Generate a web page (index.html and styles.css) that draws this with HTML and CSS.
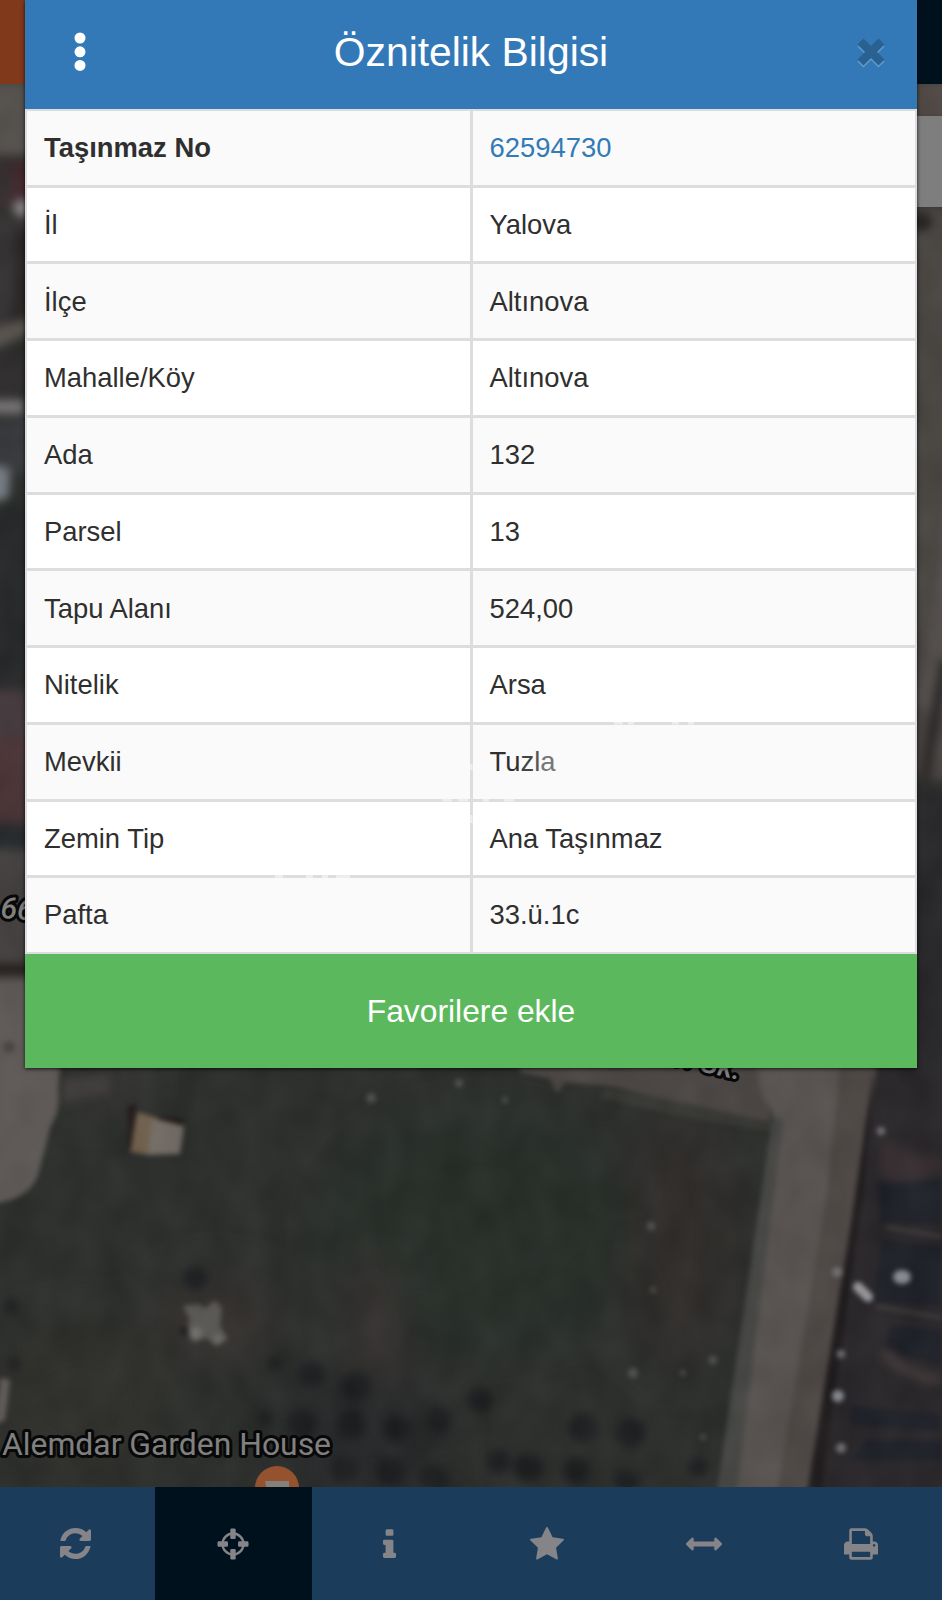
FILE: index.html
```html
<!DOCTYPE html>
<html lang="tr">
<head>
<meta charset="utf-8">
<title>Öznitelik Bilgisi</title>
<link rel="stylesheet" href="styles.css">
</head>
<body>
<div class="app">
  <svg class="map" viewBox="0 0 942 1600" aria-hidden="true">
    <defs>
      <filter id="soft" x="-20%" y="-20%" width="140%" height="140%" color-interpolation-filters="sRGB"><feGaussianBlur stdDeviation="2.4"/></filter>
      <filter id="blur" x="-20%" y="-20%" width="140%" height="140%" color-interpolation-filters="sRGB"><feGaussianBlur stdDeviation="5"/></filter>
      <filter id="haze" x="-50%" y="-50%" width="200%" height="200%" color-interpolation-filters="sRGB"><feGaussianBlur stdDeviation="22"/></filter>
      <filter id="grain" x="0" y="0" width="100%" height="100%" color-interpolation-filters="sRGB">
        <feTurbulence type="fractalNoise" baseFrequency=".03 .022" numOctaves="2" seed="8"/>
        <feColorMatrix values=".7 0 0 0 -.15  .7 0 0 0 -.15  .7 0 0 0 -.15  0 0 0 0 .08"/>
      </filter>
    </defs>
    <rect width="942" height="1600" fill="#2d302d"/>
    <g filter="url(#haze)">
      <ellipse cx="480" cy="1230" rx="150" ry="110" fill="#28302a"/>
      <ellipse cx="680" cy="1240" rx="60" ry="130" fill="#312e2c"/>
      <ellipse cx="375" cy="1320" rx="28" ry="75" fill="#393433"/>
      <ellipse cx="215" cy="1320" rx="60" ry="45" fill="#383432"/>
      <ellipse cx="80" cy="1400" rx="90" ry="80" fill="#31312d"/>
      <rect x="270" y="1380" width="170" height="120" fill="#292a2b"/>
      <ellipse cx="105" cy="1085" rx="45" ry="20" fill="#3c3938"/>
    </g>
    <g filter="url(#blur)" fill="#1c1e20">
      <circle cx="312" cy="1374" r="13"/><circle cx="356" cy="1386" r="14"/><circle cx="302" cy="1424" r="14"/><circle cx="352" cy="1424" r="14"/><circle cx="396" cy="1429" r="13"/><circle cx="439" cy="1420" r="13"/><circle cx="344" cy="1470" r="14"/><circle cx="390" cy="1471" r="14"/><circle cx="434" cy="1478" r="14"/><circle cx="274" cy="1363" r="7"/><circle cx="266" cy="1418" r="8"/><circle cx="480" cy="1400" r="12"/><circle cx="528" cy="1468" r="14"/><circle cx="584" cy="1428" r="15"/><circle cx="630" cy="1434" r="15"/><circle cx="576" cy="1470" r="13"/><circle cx="626" cy="1482" r="12"/><circle cx="698" cy="1467" r="10"/><circle cx="498" cy="1462" r="12"/>
      <circle cx="195" cy="1278" r="12"/><circle cx="10" cy="1306" r="8"/><circle cx="14" cy="1364" r="7"/>
      <path d="M62 1080L110 1072 108 1092 62 1104Z" fill="#444040"/>
    </g>
    <g filter="url(#soft)">
      <path d="M-10 950H70L58 1090Q61 1110 50 1128L40 1168Q34 1200-10 1204Z" fill="#625d5b"/>
      <path d="M0 1378L10 1380 5 1420-5 1425Z" fill="#65605e"/>
      <!-- farm building and rubble -->
      <path d="M127 1106L137 1104 136 1116 184 1118 182 1130 128 1150Z" fill="#241c1a"/>
      <path d="M137 1112L158 1118 150 1155 130 1152Z" fill="#75644f"/>
      <path d="M152 1118L184 1126 180 1154 148 1155Z" fill="#777069"/>
      <path d="M183 1306L198 1304 206 1308 215 1300 222 1308 220 1326 228 1339 216 1346 206 1338 193 1342 186 1330 190 1320Z" fill="#5e5c59"/>
      <circle cx="196" cy="1333" r="6" fill="#73716e"/><circle cx="218" cy="1339" r="5" fill="#6d6b69"/>
      <circle cx="184" cy="1331" r="5" fill="#242020"/>
      <!-- road and pavement -->
      <path d="M873 1000H970V1500H808Z" fill="#2b282b"/>
      <path d="M520 1050H770V1122L700 1108 610 1086 565 1082 557 1094 550 1079 520 1072Z" fill="#4e4947"/>
      <path d="M605 1088L690 1104 770 1122 774 1132 690 1118 600 1098Z" fill="#393a36"/>
      <path d="M753 1050H880L873 1090 811 1500H717L773 1120Q772 1105 762 1098Z" fill="#5b5653"/>
      <path d="M842 1050H880L873 1090 811 1500H776L826 1200Z" fill="#504a47"/>
      <path d="M773 1115L783 1120 737 1490H717Z" fill="#494a48"/>
      <path d="M874 1068L865 1180 820 1500H806L850 1230Z" fill="#1f1b1d"/>
      <g fill="#20222a">
        <path d="M878 1181L942 1178V1225L880 1223Z"/><path d="M882 1240L942 1246V1306L872 1302Z"/><path d="M890 1325L942 1330V1365L885 1350Z"/><path d="M850 1405L942 1415V1432L850 1425Z"/><path d="M865 1440H942V1461H850Z"/>
      </g>
      <path d="M886 1227L942 1237M876 1306L942 1318" stroke="#454141" stroke-width="3"/>
    </g>
    <g filter="url(#blur)">
      <path d="M886 1348Q910 1372 942 1374V1386Q905 1382 881 1356Z" fill="#443b3c"/>
      <path d="M882 1140Q908 1150 942 1160V1170Q900 1190 879 1175Z" fill="#393033"/>
    </g>
    <g filter="url(#soft)">
      <path d="M858 1287L868 1297" stroke="#a09fa3" stroke-width="10" stroke-linecap="round"/>
      <ellipse cx="902" cy="1277" rx="9" ry="7" fill="#92949a"/><circle cx="838" cy="1396" r="6" fill="#91929a"/>
      <g fill="#77767a"><circle cx="837" cy="1272" r="5"/><circle cx="841" cy="1354" r="4"/><circle cx="841" cy="1448" r="5"/><circle cx="881" cy="1131" r="4"/></g>
      <g fill="#525651"><circle cx="371" cy="1098" r="5"/><circle cx="459" cy="1083" r="4"/><circle cx="505" cy="1100" r="3"/><circle cx="651" cy="1226" r="4"/><circle cx="653" cy="1290" r="3"/><circle cx="713" cy="1360" r="4"/><circle cx="633" cy="1373" r="5"/><circle cx="683" cy="1373" r="3"/><circle cx="703" cy="1437" r="3"/></g>
      <circle cx="9" cy="1047" r="6" fill="#4c4644"/>
    </g>
    <g filter="url(#blur)">
      <!-- left margin -->
      <rect x="-16" y="80" width="50" height="75" fill="#585450"/>
      <rect x="-16" y="160" width="50" height="46" fill="#42292e"/><rect x="-16" y="156" width="27" height="46" fill="#352f30"/>
      <circle cx="22" cy="208" r="9" fill="#8a8689"/>
      <rect x="-16" y="218" width="50" height="110" fill="#393638"/><path d="M16 230H40V320H12Z" fill="#292524"/>
      <rect x="-16" y="348" width="50" height="48" fill="#302e2e"/>
      <rect x="-16" y="420" width="50" height="55" fill="#383a3e"/>
      <rect x="-16" y="508" width="50" height="180" fill="#292a2b"/>
      <path d="M-15 330L30 318V334L-15 352Z" fill="#5c5751"/><rect x="-16" y="400" width="40" height="14" fill="#7d7879"/>
      <path d="M-15 464L10 468 9 498-15 504Z" fill="#7d838b"/>
      <rect x="-16" y="690" width="50" height="48" fill="#483c40"/><rect x="-16" y="738" width="50" height="84" fill="#4b3437"/>
      <rect x="-16" y="826" width="50" height="23" fill="#272a2d"/><rect x="-16" y="849" width="50" height="114" fill="#474443"/><rect x="-16" y="963" width="50" height="14" fill="#241f1d"/>
      <!-- right margin -->
      <rect x="910" y="80" width="50" height="42" fill="#554d4a"/><rect x="910" y="206" width="50" height="510" fill="#4c4844"/><circle cx="922" cy="222" r="10" fill="#242323"/>
      <path d="M952 480L926 650 912 705 960 725Z" fill="#575250"/>
      <path d="M912 705L960 718V780H912Z" fill="#4b4644"/><rect x="910" y="790" width="50" height="285" fill="#29282b"/>
      <path d="M946 660L924 780" stroke="#292524" stroke-width="10"/>
    </g>
    <rect width="942" height="1600" filter="url(#grain)"/>
    <g class="street"><text x="0" y="918" transform="rotate(4 0 918)">66</text><text x="652" y="1060" transform="rotate(13 652 1060)">60. Sk.</text></g>
    <text class="place" x="2" y="1455" textLength="329" lengthAdjust="spacingAndGlyphs">Alemdar Garden House</text>
    <circle cx="277" cy="1488" r="22" fill="#94522f"/>
    <path d="M265 1481H289V1490H267Z" fill="#858079"/>
    <rect x="910" y="116" width="32" height="91" fill="#7f7e7e"/>
  </svg>

  <div class="topbar"><span class="topbar-brand"></span></div>

  <section class="dialog">
    <header class="dialog-header">
      <svg class="more" viewBox="0 0 12 40"><circle cx="6" cy="6" r="5.5"/><circle cx="6" cy="19.8" r="5.5"/><circle cx="6" cy="33.4" r="5.5"/></svg>
      <h1 class="title">Öznitelik Bilgisi</h1>
      <svg class="close" viewBox="0 0 30 32"><path class="close-light" d="M4.5 4.5L25.5 25.5M25.5 4.5L4.5 25.5" transform="translate(0 2)"/><path d="M4.5 4.5L25.5 25.5M25.5 4.5L4.5 25.5"/></svg>
    </header>
    <dl class="grid">
      <div class="row"><dt class="strong">Taşınmaz No</dt><dd class="link">62594730</dd></div>
      <div class="row"><dt>İl</dt><dd>Yalova</dd></div>
      <div class="row"><dt>İlçe</dt><dd>Altınova</dd></div>
      <div class="row"><dt>Mahalle/Köy</dt><dd>Altınova</dd></div>
      <div class="row"><dt>Ada</dt><dd>132</dd></div>
      <div class="row"><dt>Parsel</dt><dd>13</dd></div>
      <div class="row"><dt>Tapu Alanı</dt><dd>524,00</dd></div>
      <div class="row"><dt>Nitelik</dt><dd>Arsa</dd></div>
      <div class="row"><dt>Mevkii</dt><dd>Tu<span class="fade-1">z</span><span class="fade-2">l</span><span class="fade-3">a</span></dd></div>
      <div class="row"><dt>Zemin Tip</dt><dd>Ana Taşınmaz</dd></div>
      <div class="row"><dt>Pafta</dt><dd>33.ü.1c</dd></div>
    </dl>
    <button class="favorite">Favorilere ekle</button>
  </section>

  <svg class="wear" viewBox="0 0 942 1600" aria-hidden="true"><path d="M275 876.5H283M306 876.5H313M322 876.5H328M336 876.5H350M442 800H452M458 800H468M483 800H489M504 800H514M614 723H623M628 723H634M672 723H679M688 723H694M471 764V770M471 815V823"/></svg>

  <nav class="toolbar">
    <a class="tool"><svg width="31" height="31" viewBox="0 0 1536 1536"><path d="M1511 928q0 5-1 7-64 268-268 434.5t-478 166.5q-146 0-282.5-55t-243.5-157l-129 129q-19 19-45 19t-45-19-19-45v-448q0-26 19-45t45-19h448q26 0 45 19t19 45-19 45l-137 137q71 66 161 102t187 36q134 0 250-65t186-179q11-17 53-117 8-23 30-23h192q13 0 22.5 9.5t9.5 22.5zm25-800v448q0 26-19 45t-45 19h-448q-26 0-45-19t-19-45 19-45l138-138q-148-137-349-137-134 0-250 65t-186 179q-11 17-53 117-8 23-30 23h-199q-13 0-22.5-9.5t-9.5-22.5v-7q65-268 270-434.5t480-166.5q146 0 284 55.5t245 156.5l130-129q19-19 45-19t45 19 19 45z"/></svg></a>
    <a class="tool active"><svg width="32" height="32" viewBox="0 0 32 32"><circle cx="16" cy="16" r="10.5" fill="none" stroke="currentColor" stroke-width="2.4"/><rect x="13.3" y=".5" width="5.4" height="10.5" rx="1.3"/><rect x="13.3" y="21" width="5.4" height="10.5" rx="1.3"/><rect x=".5" y="13.3" width="10.5" height="5.4" rx="1.3"/><rect x="21" y="13.3" width="10.5" height="5.4" rx="1.3"/></svg></a>
    <a class="tool"><svg width="13" height="29" viewBox="0 0 640 1420"><path d="M640 1228v128q0 26-19 45t-45 19h-512q-26 0-45-19t-19-45v-128q0-26 19-45t45-19h64v-384h-64q-26 0-45-19t-19-45v-128q0-26 19-45t45-19h384q26 0 45 19t19 45v576h64q26 0 45 19t19 45zm-128-1152v192q0 26-19 45t-45 19h-256q-26 0-45-19t-19-45v-192q0-26 19-45t45-19h256q26 0 45 19t19 45z"/></svg></a>
    <a class="tool"><svg width="34" height="34" viewBox="0 0 1664 1664"><path d="M1664 615q0 22-26 48l-363 354 86 500q1 7 1 20 0 21-10.5 35.5t-30.5 14.5q-19 0-40-12l-449-236-449 236q-22 12-40 12-21 0-31.5-14.5t-10.5-35.5q0-6 2-20l86-500-364-354q-25-27-25-48 0-37 56-46l502-73 225-455q19-41 49-41t49 41l225 455 502 73q56 9 56 46z"/></svg></a>
    <a class="tool"><svg width="36" height="26" viewBox="0 0 1792 1280"><path d="M1792 640q0 26-19 45l-256 256q-19 19-45 19t-45-19-19-45v-128h-1024v128q0 26-19 45t-45 19-45-19l-256-256q-19-19-19-45t19-45l256-256q19-19 45-19t45 19 19 45v128h1024v-128q0-26 19-45t45-19 45 19l256 256q19 19 19 45z"/></svg></a>
    <a class="tool"><svg width="34" height="32" viewBox="0 0 1664 1536"><path d="M384 1408h896v-256h-896v256zm0-640h896v-384h-160q-40 0-68-28t-28-68v-160h-640v640zm1152 64q0-26-19-45t-45-19-45 19-19 45 19 45 45 19 45-19 19-45zm128 0v416q0 13-9.5 22.5t-22.5 9.5h-224v160q0 40-28 68t-68 28h-960q-40 0-68-28t-28-68v-160h-224q-13 0-22.5-9.5t-9.5-22.5v-416q0-79 56.5-135.5t135.5-56.5h64v-544q0-40 28-68t68-28h672q40 0 88 20t76 48l152 152q28 28 48 76t20 88v256h64q79 0 135.5 56.5t56.5 135.5z"/></svg></a>
  </nav>
</div>
</body>
</html>
```
FILE: styles.css
```css
* { box-sizing: border-box; }
body { margin: 0; font-family: "Liberation Sans", Arial, sans-serif; color: #2f2f2f; }
.app { position: relative; width: 942px; height: 1600px; overflow: hidden; display: flex; flex-direction: column; justify-content: space-between; }
.map, .wear { position: absolute; left: 0; top: 0; width: 942px; height: 1600px; }
.wear { fill: none; stroke: #f8f8f8; stroke-width: 3; opacity: .6; pointer-events: none; }
.place, .street { font-family: Roboto, sans-serif; fill: #808080; stroke: #080808; stroke-width: 6px; paint-order: stroke; stroke-linejoin: round; }
.place { font-size: 31.5px; }
.street { font-size: 30px; font-weight: 500; font-style: italic; }
.topbar { position: absolute; left: 0; top: 0; width: 100%; height: 84px; background: #00111e; }
.topbar-brand { display: block; width: 60px; height: 84px; background: #80391b; }
.dialog { position: relative; width: 892px; height: 1068px; margin-left: 25px; display: flex; flex-direction: column; box-shadow: 0 1px 4px rgba(0,0,0,.75); }
.dialog-header { height: 109px; flex: none; padding: 0 31px 0 49px; background: #3379b7; display: flex; align-items: center; justify-content: space-between; }
.more { width: 12px; height: 40px; fill: #fff; margin-bottom: 5px; }
.title { margin: 0 0 4px 0; font-size: 40.8px; font-weight: 400; line-height: 1; color: #fff; }
.close { width: 30px; height: 32px; margin-bottom: 3px; fill: none; stroke: #296192; stroke-width: 8.5; stroke-linecap: butt; }
.close-light { stroke: #659bc9; }
.grid { margin: 0; height: 845px; flex: none; display: grid; grid-template-rows: repeat(11, 1fr); gap: 3px; padding: 2px; background: #dddddf; }
.row { display: grid; grid-template-columns: 443px 1fr; gap: 3px; }
.row dt, .row dd { margin: 0; display: flex; align-items: center; padding: 0 0 0 17px; background: #fff; font-size: 27.4px; line-height: 1; }
.row:nth-child(odd) dt, .row:nth-child(odd) dd { background: #fafafa; }
.row .strong { font-weight: 700; }
.row .link { color: #337ab7; }
.row dd { padding-left: 16.5px; }
.fade-1 { color: #444; }
.fade-2 { color: #555; }
.fade-3 { color: #777; }
.favorite { flex: 1; border: 0; padding: 1px 0 0 0; background: #5cb85c; color: #fff; font: 31.8px "Liberation Sans", Arial, sans-serif; }
.toolbar { position: relative; width: 944px; height: 113px; margin-left: -2px; display: grid; grid-template-columns: repeat(6, 157px); background: #1b3d5b; color: #858488; }
.tool { display: flex; align-items: center; justify-content: center; padding-right: 2px; }
.tool svg { display: block; fill: currentColor; }
.tool.active { background: #00111e; }
```
